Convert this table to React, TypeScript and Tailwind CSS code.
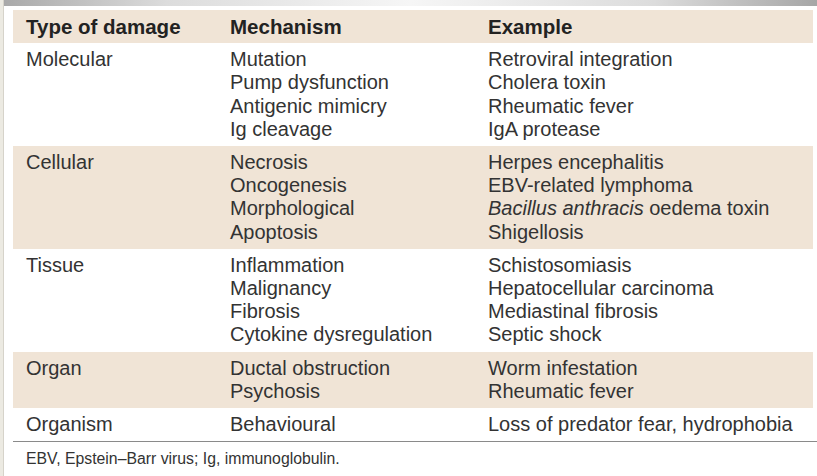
const rows = [
  {
    type: "Molecular",
    mech: ["Mutation", "Pump dysfunction", "Antigenic mimicry", "Ig cleavage"],
    ex: ["Retroviral integration", "Cholera toxin", "Rheumatic fever", "IgA protease"],
    shade: false,
  },
  {
    type: "Cellular",
    mech: ["Necrosis", "Oncogenesis", "Morphological", "Apoptosis"],
    ex: ["Herpes encephalitis", "EBV-related lymphoma", "BACILLUS", "Shigellosis"],
    shade: true,
  },
  {
    type: "Tissue",
    mech: ["Inflammation", "Malignancy", "Fibrosis", "Cytokine dysregulation"],
    ex: ["Schistosomiasis", "Hepatocellular carcinoma", "Mediastinal fibrosis", "Septic shock"],
    shade: false,
  },
  {
    type: "Organ",
    mech: ["Ductal obstruction", "Psychosis"],
    ex: ["Worm infestation", "Rheumatic fever"],
    shade: true,
  },
  {
    type: "Organism",
    mech: ["Behavioural"],
    ex: ["Loss of predator fear, hydrophobia"],
    shade: false,
  },
];

const Line = ({ text }: { text: string }) =>
  text === "BACILLUS" ? (
    <div>
      <i>Bacillus anthracis</i> oedema toxin
    </div>
  ) : (
    <div>{text}</div>
  );

const App = () => {
  return (
    <div className="flex h-[476px] w-[817px] overflow-hidden bg-white font-['Liberation_Sans',Arial,sans-serif]">
      <div className="h-full w-[4px] border-r border-[#d6d3ca] bg-[#eceae2]" />
      <div className="flex flex-1 flex-col">
        <div className="h-[6px] bg-[linear-gradient(to_right,#a9a9a9,#dcdcdc_20%,#f6f6f6_50%,#dcdcdc_80%,#a6a6a6)]" />
        <div className="ml-[9px] mr-[4px] mt-[4px]">
          <div className="grid grid-cols-[204px_258px_1fr] bg-[#f0e4d6] py-[5px] text-[20.5px] font-bold leading-[23.2px] text-[#222]">
            <div className="pl-[13px]">Type of damage</div>
            <div className="pl-[13px]">Mechanism</div>
            <div className="pl-[13px]">Example</div>
          </div>
          {rows.map((r) => (
            <div
              key={r.type}
              className={
                "grid grid-cols-[204px_258px_1fr] py-[5px] text-[20px] leading-[23.2px] text-[#333] " +
                (r.shade ? "bg-[#f0e4d6]" : "bg-white")
              }
            >
              <div className="pl-[13px]">{r.type}</div>
              <div className="pl-[13px]">
                {r.mech.map((m) => (
                  <Line key={m} text={m} />
                ))}
              </div>
              <div className="pl-[13px]">
                {r.ex.map((e) => (
                  <Line key={e} text={e} />
                ))}
              </div>
            </div>
          ))}
          <div className="-mr-[4px] border-t border-[#8a8a8a]" />
          <div className="pl-[13px] pt-[7px] text-[15.8px] leading-[20px] text-[#333]">
            EBV, Epstein–Barr virus; Ig, immunoglobulin.
          </div>
        </div>
      </div>
    </div>
  );
};

export default App;
